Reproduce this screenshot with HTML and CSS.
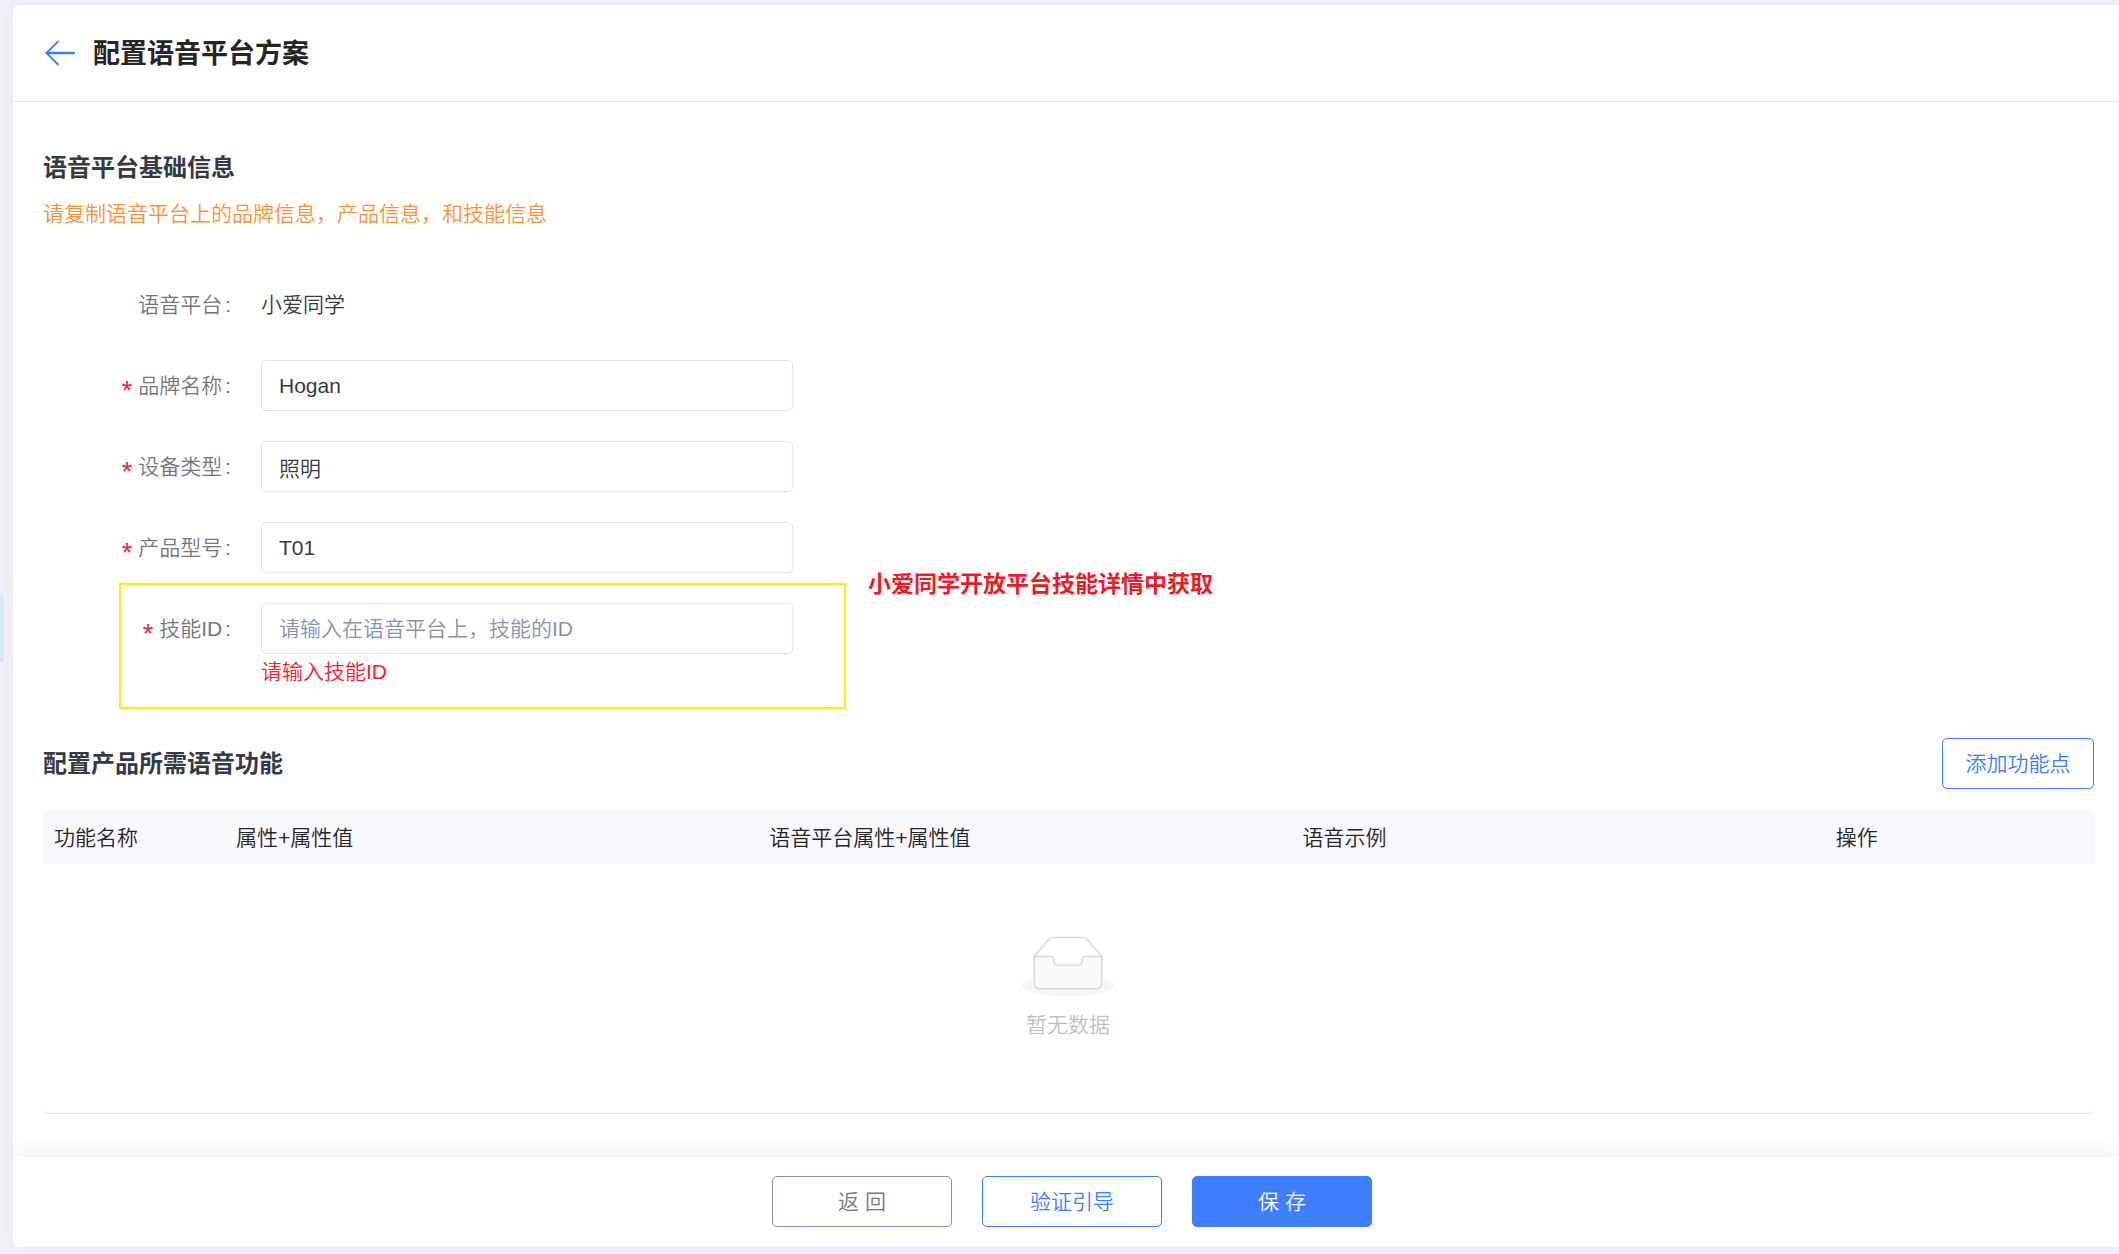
FILE: index.html
```html
<!DOCTYPE html>
<html lang="zh-CN">
<head>
<meta charset="utf-8">
<meta name="viewport" content="width=device-width, initial-scale=1">
<title>配置语音平台方案</title>
<link rel="stylesheet" href="styles.css">
</head>
<body>
<button class="drawer-handle" type="button" aria-label="展开"></button>
<div class="card">
  <header class="page-header">
    <a class="back" href="#" aria-label="返回">
      <svg width="30" height="26" viewBox="0 0 30 26" fill="none" stroke="currentColor" stroke-linecap="round" stroke-linejoin="round"><path d="M1.500 13H29" stroke-width="2.400"/><path d="M13 1.500 1.500 13 13 24.500" stroke-width="1.800"/></svg>
    </a>
    <h1>配置语音平台方案</h1>
  </header>

  <main class="content">
    <h2>语音平台基础信息</h2>
    <p class="hint">请复制语音平台上的品牌信息，产品信息，和技能信息</p>

    <form class="form" id="voice-form">
      <div class="row">
        <span class="label">语音平台<span class="colon">:</span></span>
        <span class="value">小爱同学</span>
      </div>
      <div class="row">
        <label class="label" for="brand"><span class="required">*</span>品牌名称<span class="colon">:</span></label>
        <input id="brand" type="text" value="Hogan">
      </div>
      <div class="row">
        <label class="label" for="device"><span class="required">*</span>设备类型<span class="colon">:</span></label>
        <input id="device" type="text" value="照明">
      </div>
      <div class="row">
        <label class="label" for="model"><span class="required">*</span>产品型号<span class="colon">:</span></label>
        <input id="model" type="text" value="T01">
      </div>
      <div class="row">
        <label class="label" for="skill"><span class="required">*</span>技能ID<span class="colon">:</span></label>
        <input id="skill" type="text" placeholder="请输入在语音平台上，技能的ID" aria-describedby="skill-error">
        <span class="error" id="skill-error">请输入技能ID</span>
        <span class="highlight"></span>
        <strong class="note">小爱同学开放平台技能详情中获取</strong>
      </div>
    </form>

    <div class="section-bar">
      <h2>配置产品所需语音功能</h2>
      <button class="btn btn-outline" type="button">添加功能点</button>
    </div>

    <table class="table">
      <colgroup><col class="col-name"><col class="col-wide"><col class="col-wide"><col class="col-wide"><col></colgroup>
      <thead>
        <tr><th>功能名称</th><th>属性+属性值</th><th>语音平台属性+属性值</th><th>语音示例</th><th>操作</th></tr>
      </thead>
      <tbody>
        <tr>
          <td colspan="5">
            <div class="empty">
              <svg width="94" height="60" viewBox="0 0 64 41"><g transform="translate(0 1)" fill="none" fill-rule="evenodd"><ellipse fill="#f5f5f5" cx="32" cy="33" rx="32" ry="7"/><g fill-rule="nonzero" stroke="#d9d9d9"><path d="M55 12.760 44.854 1.258C44.367.474 43.656 0 42.907 0H21.093c-.749 0-1.460.474-1.947 1.257L9 12.761V22h46v-9.240z"/><path d="M41.613 15.931c0-1.605.994-2.930 2.227-2.931H55v18.137C55 33.260 53.680 35 52.050 35h-40.100C10.320 35 9 33.259 9 31.137V13h11.160c1.233 0 2.227 1.323 2.227 2.928v.022c0 1.605 1.005 2.901 2.237 2.901h14.752c1.232 0 2.237-1.308 2.237-2.913v-.007z" fill="#fafafa"/></g></g></svg>
              <span>暂无数据</span>
            </div>
          </td>
        </tr>
      </tbody>
    </table>
  </main>

  <footer class="footer">
    <button class="btn btn-plain" type="button">返 回</button>
    <button class="btn btn-outline" type="button">验证引导</button>
    <button class="btn btn-primary" type="submit" form="voice-form">保 存</button>
  </footer>
</div>
</body>
</html>
```
FILE: styles.css
```css
* {
  box-sizing: border-box;
}

body {
  margin: 0;
  min-height: 100vh;
  padding: 5px 0 7px 13px;
  display: flex;
  background: #eff2f6;
  color: #353b43;
  font-family: "Liberation Sans", "Noto Sans CJK SC", sans-serif;
  font-size: 21px;
  font-weight: 350;
  line-height: 32px;
}

button,
input {
  font: inherit;
}

h1,
h2,
p {
  margin: 0;
}

h1 {
  padding-top: 2px;
  color: #252525;
  font-size: 27px;
  line-height: 36px;
}

h2 {
  font-size: 24px;
  line-height: 36px;
}

.drawer-handle {
  position: absolute;
  left: 0;
  top: 594px;
  width: 4px;
  height: 69px;
  padding: 0;
  border: 0;
  border-radius: 0 4px 4px 0;
  background: #d9e6fa;
}

.card {
  flex: 1;
  min-width: 0;
  display: flex;
  flex-direction: column;
  border-radius: 6px 0 0 6px;
  background: #fff;
  box-shadow: 0 0 12px #dfe6f5;
}

.page-header {
  display: flex;
  align-items: center;
  gap: 18px;
  height: 97px;
  padding: 0 32px;
  border-bottom: 1px solid #dae5f7;
}

.back {
  display: flex;
  color: #3d7fff;
}

.content {
  flex: 1;
  padding: 48px 25px 43px 30px;
}

.hint {
  margin-top: 12px;
  color: #ff9138;
}

.form {
  display: grid;
  gap: 30px;
  margin-top: 49px;
}

.row {
  position: relative;
  display: grid;
  grid-template-columns: 218px minmax(0, 532px);
  grid-template-rows: 51px;
  align-items: center;
}

.label {
  display: flex;
  justify-content: flex-end;
  padding-right: 30px;
  color: #72777f;
}

.colon {
  margin-left: 3px;
}

.required {
  height: 32px;
  margin-right: 6px;
  color: #f5222d;
  font-size: 27px;
  line-height: 42px;
}

input {
  width: 100%;
  height: 51px;
  padding: 0 17px;
  border: 1px solid #d9e6fa;
  border-radius: 5px;
  background: #fff;
  color: inherit;
}

input::placeholder {
  color: #8494ae;
  opacity: 1;
}

.error {
  grid-column: 2;
  line-height: 36px;
  color: #f5222d;
}

.highlight {
  position: absolute;
  left: 76px;
  top: -20px;
  width: 727px;
  height: 126px;
  border: 2px solid #fff000;
  pointer-events: none;
}

.note {
  position: absolute;
  left: 825px;
  top: -35px;
  color: #ed1c24;
  font-size: 23px;
  font-weight: 700;
  white-space: nowrap;
}

.section-bar {
  display: flex;
  align-items: center;
  justify-content: space-between;
  margin-top: 48px;
}

.btn {
  min-width: 152px;
  height: 51px;
  padding: 0 20px;
  border: 1px solid #3d7fff;
  border-radius: 5px;
  background: #fff;
  color: #3d7fff;
}

.table {
  width: 100%;
  margin-top: 21px;
  table-layout: fixed;
  border-collapse: separate;
  border-spacing: 0;
  border-bottom: 1px solid #dde6f2;
  border-radius: 6px;
}

.col-name {
  width: 182px;
}

.col-wide {
  width: 26%;
}

th {
  height: 54px;
  padding: 2px 11px 0;
  background: #f6f8fc;
  color: #252525;
  font-weight: 350;
  text-align: left;
}

th:first-child {
  border-top-left-radius: 6px;
}

th:last-child {
  border-top-right-radius: 6px;
}

td {
  padding: 72px 12px 72px 11px;
}

.empty {
  display: flex;
  flex-direction: column;
  align-items: center;
  gap: 13px;
  color: #bfbfbf;
}

.footer {
  display: flex;
  justify-content: center;
  gap: 30px;
  padding: 19px 0 20px 12px;
  border-radius: 0 0 0 6px;
  background: #fff;
  box-shadow: 0 -6px 18px rgba(40, 60, 90, 0.08);
  clip-path: inset(-30px 0 0 0);
}

.footer .btn {
  width: 180px;
  box-shadow: 0 2px 2px rgba(0, 0, 0, 0.03);
}

.footer .btn-plain {
  border-color: #8494ae;
  color: #72777f;
}

.footer .btn-primary {
  background: #3d7fff;
  color: #fff;
}
```
